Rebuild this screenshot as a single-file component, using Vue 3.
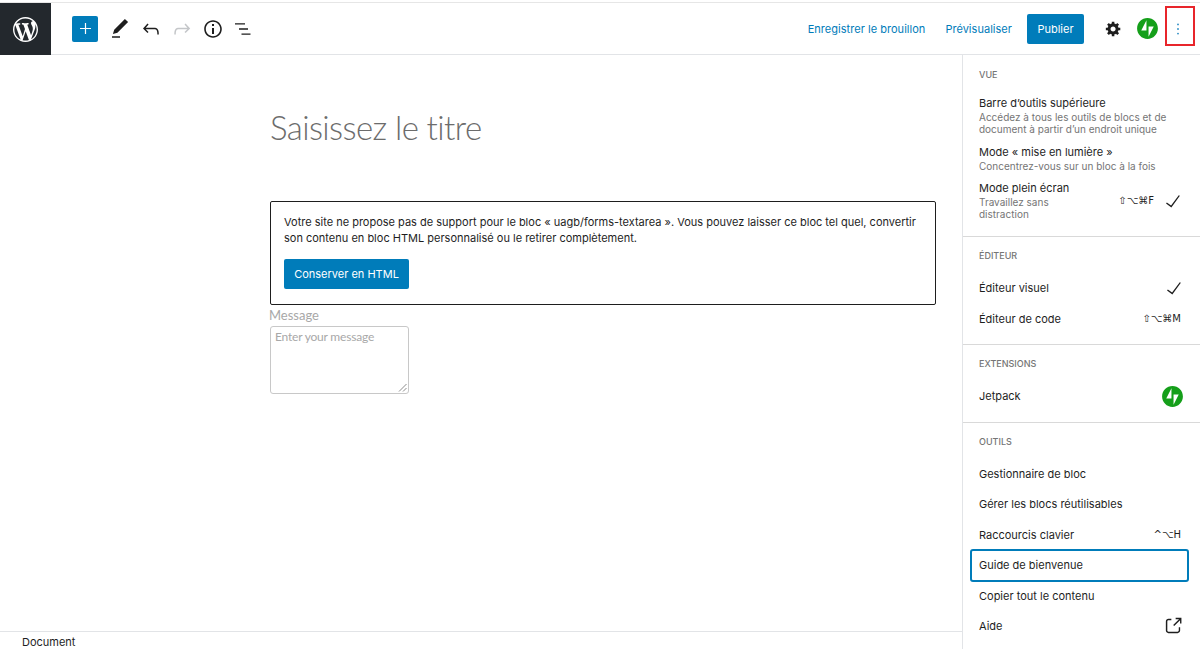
<script setup>
const sections = [
  { title: 'VUE', cls: 'view', items: [
    { label: 'Barre d’outils supérieure', desc: 'Accédez à tous les outils de blocs et de document à partir d’un endroit unique' },
    { label: 'Mode « mise en lumière »', desc: 'Concentrez-vous sur un bloc à la fois' },
    { label: 'Mode plein écran', desc: 'Travaillez sans distraction', shortcut: '⇧⌥⌘F', check: true },
  ] },
  { title: 'ÉDITEUR', cls: 'tall', items: [
    { label: 'Éditeur visuel', check: true },
    { label: 'Éditeur de code', shortcut: '⇧⌥⌘M' },
  ] },
  { title: 'EXTENSIONS', cls: 'tall', items: [
    { label: 'Jetpack', jetpack: true },
  ] },
  { title: 'OUTILS', cls: 'tall', items: [
    { label: 'Gestionnaire de bloc' },
    { label: 'Gérer les blocs réutilisables' },
    { label: 'Raccourcis clavier', shortcut: '^⌥H' },
    { label: 'Guide de bienvenue', focus: true },
    { label: 'Copier tout le contenu' },
    { label: 'Aide', external: true },
  ] },
]
const jetpackPath = 'M12 2C6.5 2 2 6.5 2 12s4.5 10 10 10 10-4.5 10-10S17.5 2 12 2zM11 14H6l5-10v10zm2 6V10h5l-5 10z'
</script>

<template>
  <div class="page">
    <header class="top">
      <div class="logo">
        <svg width="25" height="25" viewBox="0 0 20 20" fill="#fff"><path fill-rule="evenodd" d="M20 10c0-5.51-4.49-10-10-10C4.48 0 0 4.49 0 10c0 5.52 4.48 10 10 10 5.51 0 10-4.48 10-10zM7.78 15.37L4.37 6.22c.55-.02 1.17-.08 1.17-.08.5-.06.44-1.13-.06-1.11 0 0-1.45.11-2.37.11-.18 0-.37 0-.58-.01C4.12 2.69 6.87 1.11 10 1.11c2.33 0 4.45.87 6.05 2.34-.68-.11-1.65.39-1.65 1.58 0 .74.45 1.36.9 2.1.35.61.55 1.36.55 2.46 0 1.49-1.4 5-1.4 5l-3.03-8.37c.54-.02.82-.17.82-.17.5-.05.44-1.25-.06-1.22 0 0-1.44.12-2.38.12-.87 0-2.33-.12-2.33-.12-.5-.03-.56 1.2-.06 1.22l.92.08 1.26 3.41zM17.41 10c.24-.64.74-1.87.43-4.25.7 1.29 1.05 2.71 1.05 4.25 0 3.29-1.73 6.24-4.4 7.78.97-2.59 1.94-5.2 2.92-7.78zM6.1 18.09C3.12 16.65 1.11 13.53 1.11 10c0-1.3.23-2.48.72-3.59C3.25 10.3 4.67 14.2 6.1 18.09zm4.03-6.63l2.58 6.98c-.86.29-1.76.45-2.71.45-.79 0-1.57-.11-2.29-.33.81-2.38 1.62-4.74 2.42-7.1z"/></svg>
      </div>
      <div class="tools">
        <button class="add"><svg width="13" height="13" viewBox="0 0 13 13"><path d="M5.900 1h1.200v4.900H12v1.200H7.100V12H5.900V7.100H1V5.900h4.900z" fill="#fff"/></svg></button>
        <svg class="ic pencil" width="24" height="24" viewBox="0 0 24 24"><path d="M20.100 5.100L16.900 2 6.200 12.700l-1.300 4.400 4.500-1.300L20.100 5.100zM4 20.800h8v-1.500H4v1.500z"/></svg>
        <svg class="ic" width="24" height="24" viewBox="0 0 24 24"><path d="M18.300 11.700c-.6-.6-1.400-.9-2.300-.9H6.700l2.900-3.300-1.100-1-4.500 5L8.500 16l1-1-2.700-2.700H16c.5 0 .9.200 1.300.5 1 1 1 3.400 1 4.500v.3h1.500v-.2c0-1.500 0-4.300-1.500-5.700z"/></svg>
        <svg class="ic off" width="24" height="24" viewBox="0 0 24 24"><path d="M15.600 6.500l-1.100 1 2.900 3.300H8c-.9 0-1.700.3-2.300.9-1.400 1.500-1.400 4.200-1.400 5.600v.2h1.500v-.3c0-1.100 0-3.500 1-4.500.3-.3.7-.5 1.300-.5h9.200L14.500 15l1.100 1.100 4.600-4.600-4.600-5z"/></svg>
        <svg class="ic" width="24" height="24" viewBox="0 0 24 24"><path d="M12 3.200c-4.800 0-8.800 3.900-8.800 8.800 0 4.800 3.900 8.800 8.800 8.800 4.800 0 8.800-3.900 8.800-8.800 0-4.800-4-8.800-8.800-8.800zm0 16c-4 0-7.200-3.300-7.200-7.200C4.800 8 8 4.800 12 4.800s7.200 3.300 7.200 7.200c0 4-3.200 7.200-7.200 7.200zM11 17h2v-6h-2v6zm0-8h2V7h-2v2z"/></svg>
        <svg class="ic" width="24" height="24" viewBox="0 0 24 24"><path d="M3 6.200h10v1.400H3zM7 11.300h9v1.400H7zM9.500 16.400h9v1.400h-9z"/></svg>
      </div>
      <div class="actions">
        <span class="link draft">Enregistrer le brouillon</span>
        <span class="link">Prévisualiser</span>
        <button class="publish">Publier</button>
        <svg class="ic cog" width="17" height="17" viewBox="0 0 20 20"><path fill-rule="evenodd" d="M18 12h-2.180c-.170.700-.440 1.350-.810 1.930l1.540 1.540-2.100 2.100-1.540-1.540c-.580.360-1.230.630-1.910.790V19H8v-2.180c-.680-.160-1.330-.430-1.910-.790l-1.540 1.540-2.120-2.120 1.540-1.540c-.360-.580-.630-1.230-.790-1.910H1V9.030h2.170c.160-.700.440-1.350.800-1.940L2.430 5.550l2.100-2.100 1.540 1.540c.580-.370 1.240-.640 1.930-.810V2h3v2.180c.680.160 1.330.430 1.910.790l1.540-1.540 2.120 2.120-1.540 1.540c.360.590.640 1.240.800 1.940H18V12zm-8.500 1.500c1.660 0 3-1.340 3-3s-1.340-3-3-3-3 1.340-3 3 1.340 3 3 3z"/></svg>
        <svg class="jp" width="25" height="25" viewBox="0 0 24 24" fill="#159f1a"><path fill-rule="evenodd" :d="jetpackPath"/></svg>
        <span class="more">
          <svg width="24" height="24" viewBox="0 0 24 24" fill="#2b8cc4"><circle cx="12" cy="7" r="1"/><circle cx="12" cy="12" r="1"/><circle cx="12" cy="17" r="1"/></svg>
        </span>
      </div>
    </header>

    <div class="body">
      <main class="editor">
        <div class="canvas">
          <h1 class="title">Saisissez le titre</h1>
          <div class="warning">
            <p>Votre site ne propose pas de support pour le bloc « uagb/forms-textarea ». Vous pouvez laisser ce bloc tel quel, convertir son contenu en bloc HTML personnalisé ou le retirer complètement.</p>
            <button class="keep">Conserver en HTML</button>
          </div>
          <div class="msg">Message</div>
          <div class="area">
            <span>Enter your message</span>
            <svg class="grip" width="9" height="9" viewBox="0 0 9 9" stroke="#8c8c8c" fill="none"><path d="M1 8.500L8.500 1M5 8.500L8.500 5"/></svg>
          </div>
        </div>
        <footer class="status">Document</footer>
      </main>

      <aside class="menu">
        <section v-for="s in sections" :key="s.title" :class="['group', s.cls]">
          <h2>{{ s.title }}</h2>
          <div v-for="it in s.items" :key="it.label" :class="['row', { focus: it.focus, 'has-desc': it.desc }]">
            <div class="txt">
              <div class="label">{{ it.label }}</div>
              <div v-if="it.desc" :class="['desc', { narrow: it.shortcut }]">{{ it.desc }}</div>
            </div>
            <span v-if="it.shortcut" class="sc">{{ it.shortcut }}</span>
            <svg v-if="it.check" class="end check" width="22" height="22" viewBox="0 0 24 24"><path d="M18.300 5.600L9.900 16.900l-4.600-3.400-.9 1.200 5.800 4.300 9.300-12.600z"/></svg>
            <svg v-if="it.jetpack" class="jpm" width="25" height="25" viewBox="0 0 24 24" fill="#159f1a"><path fill-rule="evenodd" :d="jetpackPath"/></svg>
            <svg v-if="it.external" class="end ext" width="22" height="22" viewBox="0 0 24 24"><path d="M18.200 17c0 .7-.6 1.200-1.200 1.200H7c-.7 0-1.200-.6-1.200-1.200V7c0-.7.600-1.200 1.200-1.200h3.200V4.200H7C5.500 4.200 4.200 5.500 4.200 7v10c0 1.500 1.200 2.800 2.800 2.800h10c1.500 0 2.800-1.200 2.800-2.800v-3.600h-1.500V17zM14.900 3v1.500h3.700l-6.400 6.400 1.100 1.100 6.400-6.400v3.700h1.500V3h-6.300z"/></svg>
          </div>
        </section>
      </aside>
    </div>
  </div>
</template>

<style>
html, body { margin: 0; background: #fff; overflow: hidden; }
</style>

<style scoped>
.page {
  width: 1200px; height: 649px; overflow: hidden; display: flex; flex-direction: column;
  font-family: Inter, "Liberation Sans", sans-serif; font-size: 11px; color: #1e1e1e;
  padding-top: 2px; box-sizing: border-box; background: #fff;
}
button { font-family: inherit; border: 0; cursor: pointer; }
.top {
  height: 53px; flex: none; display: flex; align-items: center; box-sizing: border-box;
  border-top: 1px solid #e6e6e6; border-bottom: 1px solid #e2e4e7;
}
.logo { width: 51px; height: 52px; margin-bottom: -1px; background: #23282d; display: flex; align-items: center; justify-content: center; }
.tools { display: flex; align-items: center; margin-left: 21px; }
.add { width: 26px; height: 26px; padding: 0; background: #007cba; border-radius: 2px; display: flex; align-items: center; justify-content: center; margin-right: 10px; }
.ic { fill: #1e1e1e; display: block; flex: none; }
.ic.off { fill: #c4c6c9; }
.tools .ic { margin-right: 7px; }
.actions { margin-left: auto; display: flex; align-items: center; }
.link { color: #007cba; font-size: 11px; letter-spacing: .03px; }
.draft { margin-right: 20px; }
.publish { background: #007cba; color: #fff; width: 57px; height: 30px; border-radius: 2px; font-size: 11px; margin-left: 15px; padding: 0; }
.cog { margin-left: 21px; }
.jp { margin-left: 12.500px; }
.more { width: 30px; height: 40px; margin: 0 5px 6px 5.500px; padding: 6px 4px 0 0; box-sizing: border-box; border: 2px solid #e8252b; display: flex; align-items: center; justify-content: center; }
.body { flex: 1; display: flex; min-height: 0; }
.editor { flex: 1; display: flex; flex-direction: column; min-width: 0; }
.canvas { flex: 1; padding: 49px 0 0 270px; }
.title { margin: 0 0 51px; font-family: Lato, sans-serif; font-weight: 300; font-size: 33px; letter-spacing: -.6px; line-height: 46px; color: #6c6c6c; }
.warning { width: 666px; height: 104px; box-sizing: border-box; border: 1px solid #1e1e1e; border-radius: 2px; padding: 13px; }
.warning p { margin: 0 0 13px; line-height: 15.500px; font-size: 11px; }
.keep { background: #007cba; color: #fff; width: 125px; height: 30px; border-radius: 2px; font-size: 11px; padding: 0; }
.msg { font-family: Lato, sans-serif; font-size: 13px; color: #a8a8a8; line-height: 20px; margin: 0 0 0 -1px; }
.area { position: relative; width: 139px; height: 68px; box-sizing: border-box; border: 1px solid #c8c8c8; border-radius: 3px; padding: 2px 4px; margin-top: 1px; font-family: Lato, sans-serif; font-size: 12px; letter-spacing: -.2px; color: #a8a8a8; line-height: 16px; }
.grip { position: absolute; right: 1px; bottom: 1px; }
.status { height: 18px; flex: none; box-sizing: border-box; border-top: 1px solid #e2e4e7; padding-left: 22px; line-height: 21px; font-size: 11px; }
.menu { width: 238px; flex: none; box-sizing: border-box; border-left: 1px solid #e2e4e7; }
.group { border-bottom: 1px solid #d9d9d9; padding: 0 19px 10px 16px; box-sizing: border-box; }
.group:last-child { border-bottom: 0; }
.group h2 { margin: 0; font-size: 9px; font-weight: 500; color: #757575; line-height: 12px; padding-top: 13px; }
.view { height: 182px; padding-right: 16px; }
.view h2 { padding-top: 14px; padding-bottom: 15px; }
.tall h2 { padding-bottom: 11px; }
.row { display: flex; align-items: center; height: 30.500px; position: relative; }
.has-desc { align-items: flex-start; height: auto; padding-bottom: 9.500px; }
.txt { flex: 1; min-width: 0; }
.label { font-size: 11px; line-height: 14px; }
.desc { font-size: 10px; line-height: 12px; color: #757575; margin-top: 1px; }
.desc.narrow { width: 90px; }
.sc { font-family: "DejaVu Sans", Inter, sans-serif; font-size: 10px; white-space: nowrap; color: #1e1e1e; }
.has-desc .sc { margin-top: 14px; }
.end { fill: #1e1e1e; flex: none; }
.check { margin-right: -4px; }
.ext { margin-right: -2.500px; }
.jpm { flex: none; margin-right: -4px; }
.has-desc .end { margin-top: 9px; margin-left: 8px; margin-right: 0; }
.row.focus { margin: -1.250px -8px -1.250px -9px; padding: 0 8px 0 7px; box-sizing: border-box; height: 33px; border: 2px solid #007cba; border-radius: 3px; }
</style>
